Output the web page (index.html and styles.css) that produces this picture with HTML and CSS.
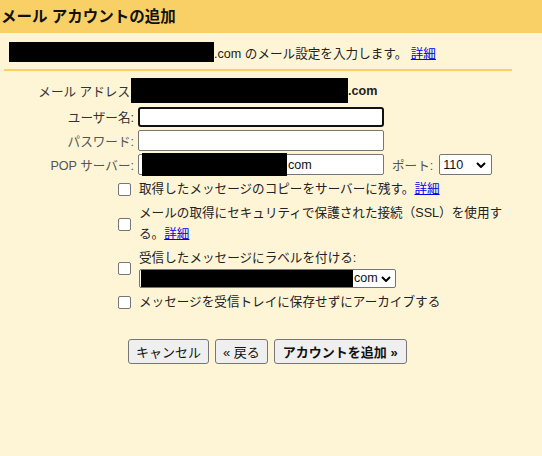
FILE: index.html
```html
<!DOCTYPE html>
<html lang="ja">
<head>
<meta charset="utf-8">
<title>メール アカウントの追加</title>
<link rel="stylesheet" href="styles.css">
</head>
<body>
<div class="header">メール アカウントの追加</div>
<div class="intro"><span class="redact r-intro"></span>.com のメール設定を入力します。 <a href="#">詳細</a></div>
<div class="sep"></div>
<div class="form">
  <div class="label dark email-label">メール アドレス</div>
  <div class="value email"><span class="redact r-email"></span>.com</div>

  <div class="label dark">ユーザー名:</div>
  <div class="value"><div class="input focused"></div></div>

  <div class="label">パスワード:</div>
  <div class="value"><div class="input"></div></div>

  <div class="label">POP サーバー:</div>
  <div class="value pop">
    <div class="input server"><span class="redact r-server"></span>com</div>
    <span class="port-label">ポート:</span>
    <div class="select port"><span class="sel-text">110</span><svg class="chev" viewBox="0 0 10 6" width="10" height="6"><polyline points="1,1 5,5 9,1" fill="none" stroke="#000" stroke-width="2"/></svg></div>
  </div>
</div>

<div class="checks">
  <div class="check-row">
    <span class="box"></span>
    <div class="check-text">取得したメッセージのコピーをサーバーに残す。<a href="#">詳細</a></div>
  </div>
  <div class="check-row">
    <span class="box"></span>
    <div class="check-text">メールの取得にセキュリティで保護された接続（SSL）を使用す<br>る。<a href="#">詳細</a></div>
  </div>
  <div class="check-row">
    <span class="box"></span>
    <div class="check-text">受信したメッセージにラベルを付ける:
      <div class="select label-select"><span class="redact r-label"></span><span class="sel-text">com</span><svg class="chev" viewBox="0 0 10 6" width="10" height="6"><polyline points="1,1 5,5 9,1" fill="none" stroke="#000" stroke-width="2"/></svg></div>
    </div>
  </div>
  <div class="check-row">
    <span class="box"></span>
    <div class="check-text">メッセージを受信トレイに保存せずにアーカイブする</div>
  </div>
</div>

<div class="buttons">
  <button class="btn">キャンセル</button>
  <button class="btn">« 戻る</button>
  <button class="btn primary">アカウントを追加 »</button>
</div>
</body>
</html>
```

FILE: styles.css
```css
html, body {
  margin: 0;
  padding: 0;
  background: #fef5d7;
  font-family: "Liberation Sans", "Noto Sans CJK JP", sans-serif;
  font-size: 12.6px;
  color: #222;
  height: 100%;
}

.header {
  background: #f9d066;
  height: 33px;
  line-height: 33px;
  padding-left: 1px;
  font-size: 15.5px;
  font-weight: bold;
  color: #111;
}

.intro {
  display: flex;
  align-items: center;
  padding: 9px 0 0 9px;
  height: 20px;
  white-space: pre;
}

.redact {
  display: inline-block;
  background: #000;
}

.r-intro { width: 205px; height: 20px; }

a { color: #0000ee; text-decoration: underline; }

.sep {
  height: 2px;
  background: #f9d066;
  margin: 7px 30px 0 4px;
}

.form {
  display: grid;
  grid-template-columns: 134px auto;
  column-gap: 4px;
  row-gap: 3px;
  grid-template-rows: 25px 21px 21px 21px;
  margin-top: 7px;
}

.label {
  text-align: right;
  color: #555;
  display: flex;
  align-items: center;
  justify-content: flex-end;
}

.label.dark { color: #333; }
.email-label { padding-right: 4px; }

.value {
  display: flex;
  align-items: center;
}

.email {
  margin-left: -7px;
  font-weight: bold;
}

.r-email { width: 217px; height: 25px; }

.input {
  box-sizing: border-box;
  width: 246px;
  height: 21px;
  background: #fff;
  border: 1px solid #767676;
  border-radius: 2px;
}

.input.focused {
  height: 20px;
  border: 2px solid #111;
  border-radius: 3px;
}

.server {
  display: flex;
  align-items: center;
  padding-left: 3px;
  font-size: 12.6px;
  color: #111;
}

.r-server { width: 145px; height: 23px; margin: -2px 1px -2px 0; }

.port-label {
  margin-left: 8px;
  color: #555;
}

.select {
  box-sizing: border-box;
  height: 21px;
  background: #fff;
  border: 1px solid #767676;
  border-radius: 2px;
  display: flex;
  align-items: center;
  color: #111;
}

.port {
  width: 53px;
  margin-left: 6px;
  padding-left: 3px;
}

.sel-text { flex: 1; }

.chev { margin-right: 5px; }

.checks {
  margin-left: 118px;
  margin-top: 4px;
  display: flex;
  flex-direction: column;
  gap: 3px;
}

.check-row {
  display: flex;
  align-items: center;
}

.box {
  box-sizing: border-box;
  width: 13px;
  height: 13px;
  border: 1px solid #767676;
  border-radius: 2px;
  background: #fff;
  margin-right: 8px;
  flex: none;
}

.check-text {
  width: 380px;
  line-height: 21px;
}

.label-select {
  width: 257px;
  height: 19px;
  padding-left: 1px;
  margin-bottom: 1px;
}

.r-label { width: 212px; height: 17px; margin-right: 1px; }

.label-select .sel-text { flex: 1; line-height: 17px; }
.label-select .chev { margin-right: 4px; }

.buttons {
  display: flex;
  gap: 6px;
  margin: 26px 0 0 128px;
}

.btn {
  box-sizing: border-box;
  height: 25px;
  padding: 0 7px;
  background: #efefef;
  border: 1px solid #767676;
  border-radius: 3px;
  font-family: "Liberation Sans", "Noto Sans CJK JP", sans-serif;
  font-size: 13px;
  color: #111;
}

.btn.primary { font-weight: bold; padding: 0 8px; }
```
